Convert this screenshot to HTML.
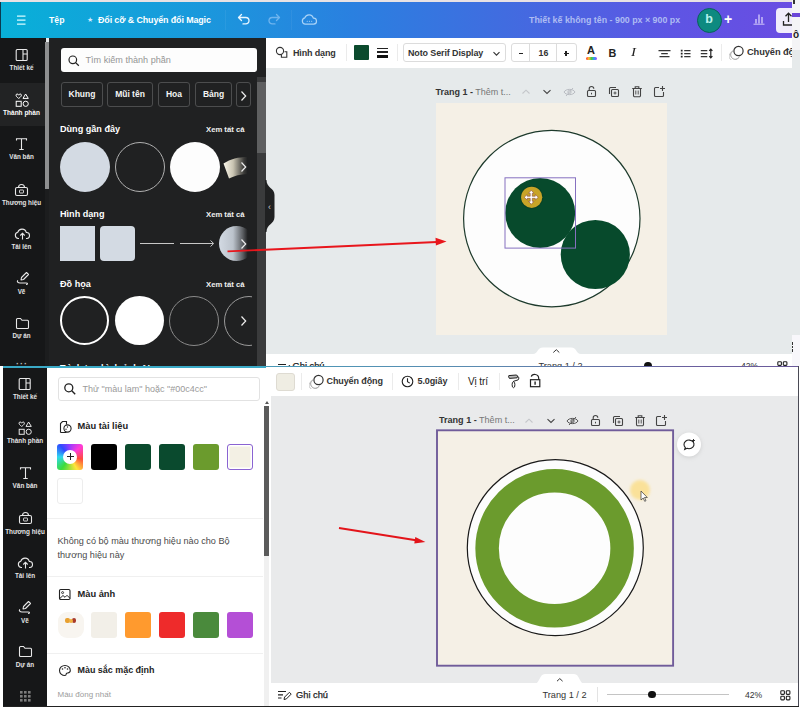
<!DOCTYPE html>
<html><head><meta charset="utf-8">
<style>
*{box-sizing:border-box;margin:0;padding:0}
html,body{width:800px;height:711px;overflow:hidden;background:#fff;font-family:"Liberation Sans","DejaVu Sans",sans-serif;}
.a{position:absolute}
.t{position:absolute;white-space:nowrap;line-height:1}
#top{position:absolute;left:0;top:0;width:800px;height:366px;overflow:hidden;background:#e6eaeb}
#bot{position:absolute;left:0;top:366px;width:800px;height:345px;overflow:hidden;background:#e9ebee}
.w{color:#fff}
.sbl{font-size:6.300px;color:#e4e4e4;font-weight:bold;text-align:center;width:43px;left:0}
.chip{top:82.300px;height:25px;border:1px solid #4c4d4e;border-radius:3px;color:#f4f4f4;font-size:8.500px;font-weight:bold;text-align:center;line-height:23px;white-space:nowrap}
.hd{font-size:9.100px;font-weight:bold;color:#fff}
.xm{font-size:7.700px;font-weight:bold;color:#f0f0f0}
.sbl2{font-size:6.400px;color:#e4e4e4;font-weight:bold;text-align:center;width:44px;left:3px}
.sw{width:26px;height:26px;border-radius:3px}
.ph{font-size:9.300px;font-weight:bold;color:#222;letter-spacing:0}
.tb{font-size:9px;font-weight:bold;color:#333;letter-spacing:-0.100px}
.sep{top:373px;width:1px;height:17px;background:#ebebeb}
</style></head><body>
<!-- ================= TOP SCREENSHOT ================= -->
<div id="top">
  <div class="a" style="left:0;top:0;width:800px;height:3px;background:#e8e2e4"></div>
  <div class="a" id="hdr" style="left:0;top:2px;width:800px;height:36px;background:linear-gradient(90deg,#08b0d8 0%,#1a98dc 25%,#2a80e0 44%,#426be0 64%,#5e55e4 84%,#6a4ce2 100%)"></div>
  <div class="a" style="left:0;top:2px;width:1px;height:36px;background:#0a3a50"></div>
  <!-- header content -->
  <svg class="a" style="left:16px;top:14px" width="11" height="12" viewBox="0 0 11 12"><path d="M1 2.2h8.5M1 6.2h8.5M1 10.2h8.5" stroke="#d8fbff" stroke-width="1.3" fill="none"/></svg>
  <div class="t w" style="left:49px;top:15.500px;font-size:8.700px;font-weight:bold">Tệp</div>
  <div class="t" style="left:87px;top:16px;font-size:7px;color:#cfe9ff">★</div>
  <div class="t w" style="left:98px;top:15.500px;font-size:8.900px;font-weight:bold;letter-spacing:-0.100px">Đổi cỡ &amp; Chuyển đổi Magic</div>
  <div class="a" style="left:225px;top:10px;width:1px;height:20px;background:rgba(255,255,255,.06)"></div>
  <svg class="a" style="left:237px;top:13px" width="15" height="13" viewBox="0 0 15 13"><path d="M4.5 1.5 1.5 4.5l3 3M1.8 4.5h7a3.2 3.2 0 0 1 0 6.4H6" stroke="#e9f6ff" stroke-width="1.3" fill="none" stroke-linecap="round" stroke-linejoin="round"/></svg>
  <svg class="a" style="left:266px;top:13px" width="15" height="13" viewBox="0 0 15 13"><path d="M10.5 1.5l3 3-3 3M13.2 4.5h-7a3.2 3.2 0 0 0 0 6.4H9" stroke="#6fb4ee" stroke-width="1.3" fill="none" stroke-linecap="round" stroke-linejoin="round"/></svg>
  <div class="a" style="left:291px;top:10px;width:1px;height:20px;background:rgba(255,255,255,.06)"></div>
  <svg class="a" style="left:301px;top:13px" width="17" height="13" viewBox="0 0 17 13"><path d="M4.3 11.2a3.2 3.2 0 0 1-.5-6.3 4.4 4.4 0 0 1 8.5.3 3 3 0 0 1 .4 6z" stroke="#a9d3f7" stroke-width="1.2" fill="none" stroke-linejoin="round"/><path d="M6.2 8.2h.1M8.4 8.2h.1M10.6 8.2h.1" stroke="#a9d3f7" stroke-width="1.1" stroke-linecap="round"/></svg>
  <div class="t" style="left:529px;top:15.5px;font-size:8.850px;font-weight:bold;color:#aebcf3;letter-spacing:0">Thiết kế không tên - 900 px × 900 px</div>
  <div class="a" style="left:696.500px;top:8px;width:25px;height:25px;border-radius:50%;background:#0d8a80;border:1.500px solid #0a5f5c"></div>
  <div class="t" style="left:705.300px;top:13px;font-size:12.500px;font-weight:bold;color:#b8f3ec">b</div>
  <div class="t w" style="left:724px;top:12px;font-size:14px;font-weight:bold">+</div>
  <svg class="a" style="left:752px;top:12px" width="14" height="14" viewBox="0 0 14 14"><path d="M4 11.5V7M7 11.5V2.5M10 11.5V5" stroke="#cfc6fa" stroke-width="1.4" fill="none"/><path d="M1.5 12.2h11" stroke="#cfc6fa" stroke-width="1"/></svg>
  <div class="a" style="left:776px;top:8px;width:24px;height:25px;border-radius:4px;background:#f0ecfb"></div>
  <svg class="a" style="left:782px;top:12px" width="12" height="15" viewBox="0 0 12 15"><path d="M6.5 10V1.5M3.5 4.2l3-3 3 3M1.5 9v4h10" stroke="#222" stroke-width="1.3" fill="none"/></svg>
  <div class="a" style="left:792px;top:0;width:8px;height:50px;background:#f4f4f6"></div>
  <div class="a" style="left:792px;top:13px;width:8px;height:4px;background:#6b46d8"></div>
  <div class="a" style="left:793px;top:0;width:2px;height:4px;background:#333"></div>
  <div class="t" style="left:793px;top:30px;font-size:10px;font-weight:bold;color:#222">ô</div>

  <!-- toolbar -->
  <div class="a" style="left:266px;top:38px;width:526px;height:29.500px;background:#fff"></div>
  <svg class="a" style="left:275px;top:46px" width="14" height="13" viewBox="0 0 14 13"><circle cx="5" cy="5" r="3.600" stroke="#333" stroke-width="1.100" fill="none"/><path d="M9.500 5.800h2.300v5.400H6.400V9" stroke="#333" stroke-width="1.100" fill="none"/></svg>
  <div class="t" style="left:293px;top:48.500px;font-size:9px;font-weight:bold;color:#333;letter-spacing:-0.150px">Hình dạng</div>
  <div class="a" style="left:346px;top:44px;width:1px;height:17px;background:#ebebeb"></div>
  <div class="a" style="left:353.500px;top:45px;width:15px;height:15px;background:#0b4a2d;border-radius:1px"></div>
  <div class="a" style="left:376.500px;top:48px;width:11px;height:1px;background:#222"></div>
  <div class="a" style="left:376.500px;top:51px;width:11px;height:2px;background:#222"></div>
  <div class="a" style="left:376.500px;top:54.500px;width:11px;height:3px;background:#111"></div>
  <div class="a" style="left:397px;top:44px;width:1px;height:17px;background:#ebebeb"></div>
  <div class="a" style="left:403px;top:43.300px;width:103px;height:19px;border:1px solid #dcdcdc;border-radius:3px"></div>
  <div class="t" style="left:408px;top:49px;font-size:8.950px;font-weight:bold;color:#333;letter-spacing:-0.100px">Noto Serif Display</div>
  <svg class="a" style="left:492px;top:51px" width="9" height="6" viewBox="0 0 9 6"><path d="M1.500 1.200l3 3 3-3" stroke="#333" stroke-width="1.100" fill="none"/></svg>
  <div class="a" style="left:511px;top:43.300px;width:66px;height:19px;border:1px solid #dcdcdc;border-radius:3px"></div>
  <div class="a" style="left:529px;top:44px;width:1px;height:18px;background:#dcdcdc"></div>
  <div class="a" style="left:556px;top:44px;width:1px;height:18px;background:#dcdcdc"></div>
  <div class="a" style="left:518.700px;top:52.500px;width:4.300px;height:1.400px;background:#222"></div>
  <div class="t" style="left:538.500px;top:48.500px;font-size:8.800px;font-weight:bold;color:#333">16</div>
  <div class="a" style="left:563.500px;top:52.500px;width:5px;height:1.400px;background:#222"></div>
  <div class="a" style="left:565.300px;top:50.700px;width:1.400px;height:5px;background:#222"></div>
  <div class="t" style="left:587px;top:45.300px;font-size:11px;font-weight:bold;color:#222">A</div>
  <div class="a" style="left:585.500px;top:56.500px;width:11.500px;height:3px;border-radius:1.500px;background:linear-gradient(90deg,#f33 0%,#fb3 25%,#4c4 50%,#39f 75%,#a4f 100%)"></div>
  <div class="t" style="left:608.500px;top:47.500px;font-size:10.800px;font-weight:bold;color:#222">B</div>
  <div class="t" style="left:630.500px;top:46.500px;font-size:11.500px;font-style:italic;color:#222;font-family:'Liberation Serif',serif;transform:scaleX(1.300);transform-origin:left">I</div>
  <svg class="a" style="left:657.500px;top:47px" width="13" height="11" viewBox="0 0 13 11"><path d="M.5 3.600h12M3.200 6.600h6.600M1.500 9.600h10" stroke="#333" stroke-width="1.100"/></svg>
  <svg class="a" style="left:679.500px;top:47px" width="12" height="11" viewBox="0 0 12 11"><path d="M4.200 3.600h6.300M4.200 6.600h6.300M4.200 9.600h6.300" stroke="#333" stroke-width="1.200"/><path d="M.8 3.600h1.800M.8 6.600h1.800M.8 9.600h1.800" stroke="#222" stroke-width="1.700"/></svg>
  <svg class="a" style="left:699.500px;top:46px" width="15" height="13" viewBox="0 0 15 13"><path d="M.8 4.600h6.500M.8 7.600h6.500M.8 10.600h6.500" stroke="#333" stroke-width="1.200"/><path d="M10.800 3.200v8.600M9.200 4.800l1.600-1.600 1.600 1.600M9.200 10.200l1.600 1.600 1.600-1.600" stroke="#222" stroke-width="1.200" fill="none"/></svg>
  <div class="a" style="left:721px;top:44px;width:1px;height:17px;background:#ebebeb"></div>
  <svg class="a" style="left:729px;top:45px" width="16" height="15" viewBox="0 0 16 15"><circle cx="9.500" cy="6" r="4.600" stroke="#333" stroke-width="1.200" fill="none"/><path d="M5.300 5.200a4.600 4.600 0 1 0 5.200 6.300" stroke="#888" stroke-width=".9" fill="none"/><path d="M3.300 7a4.400 4.400 0 1 0 5.200 6" stroke="#bbb" stroke-width=".8" fill="none"/></svg>
  <div class="t" style="left:747px;top:48px;font-size:9.300px;font-weight:bold;color:#333;letter-spacing:-0.100px;width:45px;overflow:hidden">Chuyển động</div>
  <!-- page header -->
  <div class="t" style="left:435.500px;top:87.500px;font-size:9px;color:#777"><b style="color:#333">Trang 1 -</b> Thêm t...</div>
  <svg class="a" style="left:521px;top:88px" width="10" height="8" viewBox="0 0 10 8"><path d="M1.500 5.500l3.500-3.300 3.500 3.300" stroke="#c4c6ca" stroke-width="1.100" fill="none"/></svg>
  <svg class="a" style="left:542px;top:88px" width="10" height="8" viewBox="0 0 10 8"><path d="M1.500 2.200l3.500 3.300 3.500-3.300" stroke="#444" stroke-width="1.100" fill="none"/></svg>
  <svg class="a" style="left:563px;top:87px" width="13" height="10" viewBox="0 0 13 10"><path d="M1 5c2-3.500 9-3.500 11 0-2 3.500-9 3.500-11 0z" stroke="#b9bcc2" stroke-width="1" fill="none"/><circle cx="6.500" cy="5" r="1.600" stroke="#b9bcc2" stroke-width="1" fill="none"/><path d="M3 9l7-8" stroke="#b9bcc2" stroke-width="1"/></svg>
  <svg class="a" style="left:586px;top:85px" width="11" height="13" viewBox="0 0 11 13"><rect x="1.500" y="5.500" width="8" height="6" rx="1" stroke="#444" stroke-width="1.100" fill="none"/><path d="M3.200 5.500V3.800a2.300 2.300 0 0 1 4.600 0" stroke="#444" stroke-width="1.100" fill="none"/><path d="M5.500 7.800v1.600" stroke="#444" stroke-width="1"/></svg>
  <svg class="a" style="left:608px;top:86px" width="12" height="12" viewBox="0 0 12 12"><rect x="3.500" y="3.500" width="7" height="7" rx="1" stroke="#444" stroke-width="1.100" fill="none"/><path d="M8 1.500H2.500a1 1 0 0 0-1 1V8" stroke="#444" stroke-width="1.100" fill="none"/><path d="M7 5.500v3M5.500 7h3" stroke="#444" stroke-width=".9"/></svg>
  <svg class="a" style="left:631px;top:85px" width="12" height="13" viewBox="0 0 12 13"><path d="M2.500 3.500h7v7a1.200 1.200 0 0 1-1.200 1.200H3.700a1.200 1.200 0 0 1-1.200-1.200zM1.200 3.500h9.600M4.200 3.200V1.800h3.600v1.400" stroke="#444" stroke-width="1.100" fill="none"/><path d="M4.800 5.500v4M7.200 5.500v4" stroke="#444" stroke-width=".9"/></svg>
  <svg class="a" style="left:653px;top:85px" width="13" height="13" viewBox="0 0 13 13"><path d="M6 2.500H2.500a1 1 0 0 0-1 1v7a1 1 0 0 0 1 1h7a1 1 0 0 0 1-1V7" stroke="#444" stroke-width="1.100" fill="none"/><path d="M9.500 1v5M7 3.500h5" stroke="#444" stroke-width="1.100"/></svg>
  <!-- page -->
  <div class="a" style="left:435.500px;top:102.500px;width:231px;height:232.500px;background:#f5f0e6"></div>
  <svg class="a" style="left:430px;top:95px" width="250" height="250" viewBox="430 95 250 250">
    <circle cx="551.800" cy="218.600" r="88.200" fill="#fdfdfd" stroke="#1d3a2c" stroke-width="1.200"/>
    <circle cx="540.200" cy="213" r="35" fill="#074a2c"/>
    <circle cx="595.300" cy="254.500" r="34.600" fill="#074a2c"/>
    <rect x="505" y="177.800" width="70.500" height="70.300" fill="none" stroke="#8670c0" stroke-width="1"/>
    <circle cx="531.700" cy="197.300" r="11.500" fill="#0b3a22" opacity=".5"/>
    <circle cx="531.700" cy="197.300" r="10.600" fill="#c8a428"/>
    <path transform="translate(531.700 197.300) scale(1.150) translate(-531.700 -197.300)" d="M525.200 197.300l2.600-2.400v1.500h2.600v-2.600h-1.500l2.400-2.600 2.400 2.600h-1.500v2.600h2.600v-1.500l2.600 2.400-2.600 2.400v-1.500h-2.600v2.600h1.500l-2.400 2.600-2.400-2.600h1.500v-2.600h-2.600v1.500z" fill="#fff" stroke="#8a4a3a" stroke-width=".5"/>
  </svg>
  <!-- bottom bar of top screenshot -->
  <div class="a" style="left:266px;top:353.500px;width:526px;height:13px;background:#fff"></div>
  <svg class="a" style="left:530px;top:344px" width="60" height="10" viewBox="530 344 60 10"><path d="M533 354c5 0 4-6.500 10-6.500h28c6 0 5 6.500 10 6.500z" fill="#fff"/><path d="M553.300 352.500l3 -2.800 3 2.800" stroke="#333" stroke-width="1" fill="none"/></svg>
  <div class="a" style="left:792px;top:334.500px;width:8px;height:32px;background:#f8f7fb"></div>
  <div class="a" style="left:792.200px;top:342px;width:1.300px;height:10px;background:repeating-linear-gradient(180deg,#333 0 2.800px,transparent 2.800px 3.600px)"></div>
  <svg class="a" style="left:277px;top:361.500px" width="15" height="12" viewBox="0 0 15 12"><path d="M1 2.500h8M1 5.800h5M1 9h3.500" stroke="#222" stroke-width="1.200"/><path d="M7 10.500l.6-2.400 4.800-4.800 1.800 1.800-4.800 4.800z" stroke="#222" stroke-width="1" fill="none" stroke-linejoin="round"/></svg>
  <div class="t" style="left:292.500px;top:362.300px;font-size:9.300px;color:#222;-webkit-text-stroke:.25px #222">Ghi chú</div>
  <div class="t" style="left:538.500px;top:362px;font-size:9.200px;color:#333">Trang 1 / 2</div>
  <div class="a" style="left:644.200px;top:362px;width:7.600px;height:7.600px;border-radius:50%;background:#111"></div>
  <div class="t" style="left:741px;top:362.300px;font-size:8.600px;color:#333">42%</div>
  <svg class="a" style="left:777px;top:361px" width="11" height="11" viewBox="0 0 11 11"><rect x=".8" y=".8" width="3.600" height="3.600" rx=".8" stroke="#222" stroke-width="1.100" fill="none"/><rect x="6.300" y=".8" width="3.600" height="3.600" rx=".8" stroke="#222" stroke-width="1.100" fill="none"/><rect x=".8" y="6.300" width="3.600" height="3.600" rx=".8" stroke="#222" stroke-width="1.100" fill="none"/><rect x="6.300" y="6.300" width="3.600" height="3.600" rx=".8" stroke="#222" stroke-width="1.100" fill="none"/></svg>
  <!-- sidebar -->
  <div class="a" style="left:0;top:38px;width:46px;height:328px;background:#161718"></div>
  <div class="a" style="left:0;top:83px;width:45px;height:43px;background:#222324"></div>
  <div class="a" style="left:45px;top:42px;width:4px;height:147px;background:#8e8f90"></div>
  <div class="a" style="left:45px;top:189px;width:4px;height:177px;background:#1c1d1e"></div>
  <!-- sidebar icons -->
  <svg class="a" style="left:15px;top:48px" width="14" height="14" viewBox="0 0 14 14"><rect x="1.2" y="1.5" width="11" height="11" rx="1" stroke="#e8e8e8" stroke-width="1.1" fill="none"/><path d="M8 1.5v11M8 6h4.2" stroke="#e8e8e8" stroke-width="1.1"/></svg>
  <div class="t sbl" style="top:64.500px">Thiết kế</div>
  <svg class="a" style="left:14.500px;top:93px" width="15" height="15" viewBox="0 0 15 15"><path d="M1 2.2c0-1.6 2.2-1.6 2.7 0 .5-1.6 2.7-1.6 2.7 0 0 1.500-2.700 3.200-2.700 3.200S1 3.700 1 2.200z" stroke="#fff" stroke-width="1" fill="none"/><path d="M10.600 1 13.300 5.400H8z" stroke="#fff" stroke-width="1" fill="none" stroke-linejoin="round"/><rect x="1.200" y="8.300" width="5" height="5" stroke="#fff" stroke-width="1" fill="none"/><circle cx="10.700" cy="10.800" r="2.600" stroke="#fff" stroke-width="1" fill="none"/></svg>
  <div class="t sbl" style="top:109.500px;color:#fff;font-size:6.500px">Thành phần</div>
  <svg class="a" style="left:14.800px;top:137.300px" width="13" height="14" viewBox="0 0 13 14"><path d="M1.500 3.500V1.800h10v1.700M6.500 1.800v10.700M4.300 12.500h4.400" stroke="#e8e8e8" stroke-width="1.1" fill="none"/></svg>
  <div class="t sbl" style="top:154px">Văn bản</div>
  <svg class="a" style="left:14.300px;top:182.500px" width="15" height="14" viewBox="0 0 15 14"><rect x="1.500" y="4.500" width="12" height="8" rx="1.500" stroke="#e8e8e8" stroke-width="1.100" fill="none"/><path d="M4.500 4.500c0-4 6-4 6 0" stroke="#e8e8e8" stroke-width="1.100" fill="none"/><rect x="5.500" y="7" width="4" height="3" rx=".5" stroke="#e8e8e8" stroke-width=".9" fill="none"/></svg>
  <div class="t sbl" style="top:199.500px">Thương hiệu</div>
  <svg class="a" style="left:13.500px;top:227px" width="17" height="14" viewBox="0 0 17 14"><path d="M5 11.500H4.300a3.200 3.200 0 0 1-.5-6.300 4.400 4.400 0 0 1 8.500.3 3 3 0 0 1 .4 6H12" stroke="#e8e8e8" stroke-width="1.100" fill="none"/><path d="M8.500 12.500v-6M6.300 8.500l2.200-2.200 2.200 2.200" stroke="#e8e8e8" stroke-width="1.100" fill="none"/></svg>
  <div class="t sbl" style="top:244.200px">Tải lên</div>
  <svg class="a" style="left:15.800px;top:271.300px" width="15" height="15" viewBox="0 0 15 15"><path d="M5.500 6.500l5-5 2 2-5 5-2.500.5z" stroke="#e8e8e8" stroke-width="1.100" fill="none" stroke-linejoin="round"/><path d="M2 9.500c-1.500 1 0 2.500 2 2.500h6c2 0 2 1.500 0 1.500" stroke="#e8e8e8" stroke-width="1.100" fill="none"/></svg>
  <div class="t sbl" style="top:289px">Vẽ</div>
  <svg class="a" style="left:14.500px;top:317px" width="15" height="13" viewBox="0 0 15 13"><path d="M1.500 2.500a1 1 0 0 1 1-1h3l1.500 1.800h5.500a1 1 0 0 1 1 1v6.200a1 1 0 0 1-1 1h-10a1 1 0 0 1-1-1z" stroke="#e8e8e8" stroke-width="1.100" fill="none"/></svg>
  <div class="t sbl" style="top:332.600px">Dự án</div>
  <div class="t" style="left:16px;top:359.500px;font-size:9px;color:#bbb;letter-spacing:1px;font-weight:bold">···</div>
  <!-- panel -->
  <div class="a" style="left:49px;top:38px;width:217px;height:328px;background:#202122"></div>
  <div class="a" style="left:257px;top:77px;width:9px;height:289px;background:#3a3b3c"></div>
  <div class="a" style="left:257px;top:82px;width:9px;height:71px;background:#5e5f60"></div>
  <div class="a" style="left:60.500px;top:48px;width:196px;height:24px;background:#fdfdfd;border-radius:3px"></div>
  <svg class="a" style="left:66.500px;top:53.500px" width="14" height="14" viewBox="0 0 14 14"><circle cx="5.800" cy="5.800" r="3.800" stroke="#222" stroke-width="1.200" fill="none"/><path d="M8.600 8.600l3.200 3.200" stroke="#222" stroke-width="1.300"/></svg>
  <div class="t" style="left:85.500px;top:56px;font-size:9.100px;color:#959595">Tìm kiếm thành phần</div>
  <!-- chips -->
  <div class="a chip" style="left:61px;width:42px">Khung</div>
  <div class="a chip" style="left:107px;width:46px">Mũi tên</div>
  <div class="a chip" style="left:158px;width:32px">Hoa</div>
  <div class="a chip" style="left:195px;width:37px">Bảng</div>
  <div class="a chip" style="left:236px;width:15px"></div><svg class="a" style="left:240px;top:90px" width="8" height="12" viewBox="0 0 8 12"><path d="M1.500 1.500l4.200 4.500-4.200 4.500" stroke="#eee" stroke-width="1.200" fill="none"/></svg>
  <!-- recently used -->
  <div class="t hd" style="left:60px;top:125px">Dùng gần đây</div>
  <div class="t xm" style="left:206px;top:126px">Xem tất cả</div>
  <div class="a" style="left:60px;top:141.500px;width:50px;height:50px;border-radius:50%;background:#d3dae3"></div>
  <div class="a" style="left:115px;top:141.500px;width:50px;height:50px;border-radius:50%;border:1px solid #b0b0b0"></div>
  <div class="a" style="left:170px;top:141.500px;width:50px;height:50px;border-radius:50%;background:#fdfdfd"></div>
  <svg class="a" style="left:220px;top:152px" width="30" height="30" viewBox="220 152 30 30"><defs><linearGradient id="cupg" x1="0" x2="1" y1="0" y2="0"><stop offset="0" stop-color="#fbf7ea"/><stop offset=".4" stop-color="#c9c4b2"/><stop offset=".85" stop-color="#3a3a38"/><stop offset="1" stop-color="#202122"/></linearGradient></defs><path d="M223.500 163.500c7-4.500 15-6.500 24-6.500v17c-7 .3-13 1.800-18.500 4.500z" fill="url(#cupg)"/></svg>
  <svg class="a" style="left:240px;top:161px" width="8" height="12" viewBox="0 0 8 12"><path d="M1.500 1.500l4.200 4.500-4.200 4.500" stroke="#eee" stroke-width="1.200" fill="none"/></svg>
  <!-- shapes -->
  <div class="t hd" style="left:60px;top:210px">Hình dạng</div>
  <div class="t xm" style="left:206px;top:211px">Xem tất cả</div>
  <div class="a" style="left:60px;top:226px;width:35px;height:35px;background:#d3dae3"></div>
  <div class="a" style="left:100px;top:226px;width:35px;height:35px;background:#d3dae3;border-radius:4px"></div>
  <div class="a" style="left:140px;top:243px;width:34px;height:1px;background:#c8c8c8"></div>
  <div class="a" style="left:180px;top:243px;width:33px;height:1px;background:#c8c8c8"></div>
  <svg class="a" style="left:208px;top:239px" width="8" height="9" viewBox="0 0 8 9"><path d="M2.500 1.500l3.200 3-3.200 3" stroke="#c8c8c8" stroke-width="1" fill="none"/></svg>
  <div class="a" style="left:219px;top:226px;width:29px;height:35px;overflow:hidden"><div class="a" style="left:0;top:0;width:35px;height:35px;border-radius:50%;background:linear-gradient(90deg,#d3dae3 0%,#bcc3cc 40%,#5b5e62 68%,#202122 82%)"></div></div>
  <svg class="a" style="left:240px;top:238px" width="8" height="12" viewBox="0 0 8 12"><path d="M1.500 1.500l4.200 4.500-4.200 4.500" stroke="#eee" stroke-width="1.200" fill="none"/></svg>
  <!-- graphics -->
  <div class="t hd" style="left:60px;top:279.500px">Đồ họa</div>
  <div class="t xm" style="left:206px;top:280.500px">Xem tất cả</div>
  <div class="a" style="left:60px;top:296px;width:49px;height:49px;border-radius:50%;border:2px solid #fff"></div>
  <div class="a" style="left:115px;top:296px;width:49px;height:49px;border-radius:50%;background:#fff"></div>
  <div class="a" style="left:169px;top:296px;width:50px;height:50px;border-radius:50%;border:1px solid #8a8a8a"></div>
  <div class="a" style="left:224px;top:296px;width:28px;height:50px;overflow:hidden"><div class="a" style="left:0;top:0;width:50px;height:50px;border-radius:50%;border:1px solid #9a9a9a"></div></div>
  <svg class="a" style="left:240px;top:315px" width="8" height="12" viewBox="0 0 8 12"><path d="M1.500 1.500l4.200 4.500-4.200 4.500" stroke="#eee" stroke-width="1.200" fill="none"/></svg>
  <div class="t hd" style="left:60px;top:364.200px">Trình tạo hình ảnh AI</div>
  <!-- collapse handle -->
  <svg class="a" style="left:265px;top:178px" width="12" height="58" viewBox="265 178 12 58"><path d="M265 180h1.500c0 8 8 8 8 15v22c0 7-8 7-8 15H265z" fill="#202122"/></svg>
  <div class="t" style="left:268px;top:202.500px;font-size:9px;color:#ccc">&#x2039;</div>
  <!-- red arrow -->
  <svg class="a" style="left:220px;top:230px" width="240" height="30" viewBox="220 230 240 30"><path d="M227.500 251.400L437 242" stroke="#e8161c" stroke-width="1.900" fill="none"/><path d="M446.500 241.400l-11-3.600.4 7.600z" fill="#e8161c"/></svg>
</div>
<!-- ================= BOTTOM SCREENSHOT ================= -->
<div id="bot"><div class="a" style="left:0;top:-366px;width:800px;height:711px">
  <div class="a" style="left:0;top:366px;width:800px;height:345px;background:#fff"></div>
  <!-- canvas bg -->
  <div class="a" style="left:271px;top:367px;width:527px;height:339px;background:#e9eaeb"></div>
  <!-- sidebar -->
  <div class="a" style="left:3px;top:367px;width:44px;height:339px;background:#161718"></div>
  <svg class="a" style="left:18px;top:377px" width="14" height="14" viewBox="0 0 14 14"><rect x="1.200" y="1.500" width="11" height="11" rx="1" stroke="#e8e8e8" stroke-width="1.100" fill="none"/><path d="M8 1.500v11M8 6h4.200" stroke="#e8e8e8" stroke-width="1.100"/></svg>
  <div class="t sbl2" style="top:393.500px">Thiết kế</div>
  <svg class="a" style="left:18px;top:421px" width="15" height="15" viewBox="0 0 15 15"><path d="M1 2.200c0-1.600 2.200-1.600 2.700 0 .5-1.600 2.700-1.600 2.700 0 0 1.500-2.700 3.200-2.700 3.200S1 3.700 1 2.200z" stroke="#e8e8e8" stroke-width="1" fill="none"/><path d="M10.600 1 13.300 5.400H8z" stroke="#e8e8e8" stroke-width="1" fill="none" stroke-linejoin="round"/><rect x="1.200" y="8.300" width="5" height="5" stroke="#e8e8e8" stroke-width="1" fill="none"/><circle cx="10.700" cy="10.800" r="2.600" stroke="#e8e8e8" stroke-width="1" fill="none"/></svg>
  <div class="t sbl2" style="top:437.500px">Thành phần</div>
  <svg class="a" style="left:19px;top:466px" width="13" height="14" viewBox="0 0 13 14"><path d="M1.500 3.500V1.800h10v1.700M6.500 1.800v10.700M4.300 12.500h4.400" stroke="#e8e8e8" stroke-width="1.100" fill="none"/></svg>
  <div class="t sbl2" style="top:483px">Văn bản</div>
  <svg class="a" style="left:18px;top:511px" width="15" height="14" viewBox="0 0 15 14"><rect x="1.500" y="4.500" width="12" height="8" rx="1.500" stroke="#e8e8e8" stroke-width="1.100" fill="none"/><path d="M4.500 4.500c0-4 6-4 6 0" stroke="#e8e8e8" stroke-width="1.100" fill="none"/><rect x="5.500" y="7" width="4" height="3" rx=".5" stroke="#e8e8e8" stroke-width=".9" fill="none"/></svg>
  <div class="t sbl2" style="top:528.500px">Thương hiệu</div>
  <svg class="a" style="left:17px;top:556px" width="17" height="14" viewBox="0 0 17 14"><path d="M5 11.500H4.300a3.200 3.200 0 0 1-.5-6.300 4.400 4.400 0 0 1 8.500.3 3 3 0 0 1 .4 6H12" stroke="#e8e8e8" stroke-width="1.100" fill="none"/><path d="M8.500 12.500v-6M6.300 8.500l2.200-2.200 2.200 2.200" stroke="#e8e8e8" stroke-width="1.100" fill="none"/></svg>
  <div class="t sbl2" style="top:572.500px">Tải lên</div>
  <svg class="a" style="left:18px;top:600px" width="15" height="15" viewBox="0 0 15 15"><path d="M5.500 6.500l5-5 2 2-5 5-2.500.5z" stroke="#e8e8e8" stroke-width="1.100" fill="none" stroke-linejoin="round"/><path d="M2 9.500c-1.500 1 0 2.500 2 2.500h6c2 0 2 1.500 0 1.500" stroke="#e8e8e8" stroke-width="1.100" fill="none"/></svg>
  <div class="t sbl2" style="top:618px">Vẽ</div>
  <svg class="a" style="left:18px;top:645px" width="15" height="13" viewBox="0 0 15 13"><path d="M1.500 2.500a1 1 0 0 1 1-1h3l1.500 1.800h5.500a1 1 0 0 1 1 1v6.200a1 1 0 0 1-1 1h-10a1 1 0 0 1-1-1z" stroke="#e8e8e8" stroke-width="1.100" fill="none"/></svg>
  <div class="t sbl2" style="top:661.800px">Dự án</div>
  <svg class="a" style="left:20px;top:691px" width="11" height="11" viewBox="0 0 11 11" fill="#7c7c7c"><rect x="0" y="0" width="2.600" height="2.600"/><rect x="4" y="0" width="2.600" height="2.600"/><rect x="8" y="0" width="2.600" height="2.600"/><rect x="0" y="4" width="2.600" height="2.600"/><rect x="4" y="4" width="2.600" height="2.600"/><rect x="8" y="4" width="2.600" height="2.600"/><rect x="0" y="8" width="2.600" height="2.600"/><rect x="4" y="8" width="2.600" height="2.600"/><rect x="8" y="8" width="2.600" height="2.600"/></svg>
  <!-- panel -->
  <div class="a" style="left:47px;top:367px;width:223px;height:339px;background:#fff"></div>
  <div class="a" style="left:57.500px;top:377px;width:202.500px;height:24px;border:1px solid #e2e2e2;border-radius:3px;background:#fff"></div>
  <svg class="a" style="left:63px;top:382px" width="14" height="14" viewBox="0 0 14 14"><circle cx="5.800" cy="5.800" r="4" stroke="#222" stroke-width="1.300" fill="none"/><path d="M8.800 8.800l3.400 3.400" stroke="#222" stroke-width="1.400"/></svg>
  <div class="t" style="left:82.500px;top:384.500px;font-size:9px;color:#9a9a9a">Thử "màu lam" hoặc "#00c4cc"</div>
  <div class="a" style="left:264px;top:405.500px;width:5px;height:150px;background:#5b5b5b"></div><div class="a" style="left:264.500px;top:400.500px;width:0;height:0;border-left:2px solid transparent;border-right:2px solid transparent;border-bottom:3px solid #555"></div>
  <div class="a" style="left:264px;top:556px;width:5px;height:150px;background:#f0f0f0"></div>
  <svg class="a" style="left:58px;top:420px" width="15" height="14" viewBox="0 0 15 14"><path d="M2.500 12.500h6M2.500 12.500V3.500l2-2h4v3" stroke="#222" stroke-width="1.100" fill="none"/><circle cx="9.500" cy="8.500" r="3.600" stroke="#222" stroke-width="1.100" fill="#fff"/><circle cx="9.500" cy="7" r=".7" fill="#222"/><circle cx="8" cy="9.300" r=".7" fill="#222"/></svg>
  <div class="t ph" style="left:77.500px;top:421.800px">Màu tài liệu</div>
  <div class="a sw" style="left:57px;top:443.500px;background:conic-gradient(from 0deg,#9a3bff 0deg,#ff3bd8 45deg,#ff4b3b 100deg,#ffe53b 150deg,#3bdc3b 215deg,#2fd8f0 270deg,#2f4bff 320deg,#9a3bff 360deg)"></div>
  <div class="a" style="left:63.200px;top:449.500px;width:14px;height:14px;border-radius:50%;background:#fff"></div>
  <div class="a" style="left:66.700px;top:455.900px;width:7px;height:1.200px;background:#222"></div>
  <div class="a" style="left:69.600px;top:453px;width:1.200px;height:7px;background:#222"></div>
  <div class="a sw" style="left:91px;top:443.500px;background:#000"></div>
  <div class="a sw" style="left:125px;top:443.500px;background:#0b4a2d"></div>
  <div class="a sw" style="left:159px;top:443.500px;background:#0a4a2e"></div>
  <div class="a sw" style="left:193px;top:443.500px;background:#6b9b2d"></div>
  <div class="a sw" style="left:227px;top:443.500px;background:#f3f0e4;border:1.500px solid #8a63d2;box-shadow:inset 0 0 0 1.500px #fff"></div>
  <div class="a sw" style="left:57px;top:478px;background:#fff;border:1px solid #ededed"></div>
  <div class="a" style="left:47px;top:518px;width:216px;height:1px;background:#f0f0f0"></div>
  <div class="t" style="left:57.500px;top:537px;font-size:9.120px;color:#4a4a4a;letter-spacing:0">Không có bộ màu thương hiệu nào cho Bộ</div>
  <div class="t" style="left:57.500px;top:551px;font-size:9.120px;color:#4a4a4a;letter-spacing:0">thương hiệu này</div>
  <div class="a" style="left:47px;top:575.500px;width:216px;height:1px;background:#f0f0f0"></div>
  <svg class="a" style="left:58px;top:588px" width="14" height="13" viewBox="0 0 14 13"><rect x="1.500" y="1.500" width="10.500" height="10" rx="1.200" stroke="#222" stroke-width="1.100" fill="none"/><circle cx="4.600" cy="4.600" r="1" stroke="#222" stroke-width=".9" fill="none"/><path d="M1.800 10.500l3.200-3 2 1.800 2-2 3 3" stroke="#222" stroke-width="1" fill="none"/></svg>
  <div class="t ph" style="left:77.500px;top:590.200px">Màu ảnh</div>
  <div class="a sw" style="left:57.500px;top:612px;background:#f8f5f0;border-radius:9px"></div>
  <div class="a" style="left:64.500px;top:617.500px;width:5px;height:5.500px;background:#e8a030;border-radius:2px"></div>
  <div class="a" style="left:71.500px;top:617.500px;width:4.500px;height:5.500px;background:#a83a2c;border-radius:2px"></div>
  <div class="a" style="left:68.500px;top:618.500px;width:4px;height:4.500px;background:#f0b040;border-radius:2px"></div>
  <div class="a sw" style="left:91px;top:612px;background:#f2efe8"></div>
  <div class="a sw" style="left:125px;top:612px;background:#ff9a2e"></div>
  <div class="a sw" style="left:159px;top:612px;background:#ee2b2b"></div>
  <div class="a sw" style="left:193px;top:612px;background:#4a8a3c"></div>
  <div class="a sw" style="left:227px;top:612px;background:#b44fd6"></div>
  <div class="a" style="left:47px;top:653px;width:216px;height:1px;background:#f0f0f0"></div>
  <svg class="a" style="left:58px;top:664px" width="14" height="13" viewBox="0 0 14 13"><path d="M7 1.500a5.500 5 0 1 0 0 10c1.500 0 1-1.500 1.500-2.200.6-.8 3.800.4 3.800-2.800 0-3-2.400-5-5.300-5z" stroke="#222" stroke-width="1.100" fill="none"/><circle cx="4.500" cy="5" r=".8" fill="#222"/><circle cx="7" cy="3.800" r=".8" fill="#222"/><circle cx="9.500" cy="5" r=".8" fill="#222"/></svg>
  <div class="t ph" style="left:77.500px;top:666.200px;font-size:8.950px">Màu sắc mặc định</div>
  <div class="t" style="left:57.500px;top:690.500px;font-size:8px;color:#9c9c9c">Màu đồng nhất</div>
  <!-- toolbar -->
  <div class="a" style="left:271px;top:367px;width:527px;height:29px;background:#fff"></div>
  <div class="a" style="left:275.500px;top:372.500px;width:19.500px;height:18.500px;background:#efede3;border:1px solid #dedbd2;border-radius:3px"></div>
  <div class="a sep" style="left:301px"></div>
  <svg class="a" style="left:309px;top:374px" width="16" height="15" viewBox="0 0 16 15"><circle cx="9.500" cy="6" r="4.600" stroke="#333" stroke-width="1.200" fill="none"/><path d="M5.300 5.200a4.600 4.600 0 1 0 5.200 6.300" stroke="#888" stroke-width=".9" fill="none"/><path d="M3.300 7a4.400 4.400 0 1 0 5.200 6" stroke="#bbb" stroke-width=".8" fill="none"/></svg>
  <div class="t tb" style="left:326.500px;top:377px">Chuyển động</div>
  <div class="a sep" style="left:392px"></div>
  <svg class="a" style="left:401px;top:375px" width="13" height="13" viewBox="0 0 13 13"><circle cx="6.500" cy="6.500" r="5.300" stroke="#222" stroke-width="1.100" fill="none"/><path d="M6.500 3.300v3.400l2.300 1.400" stroke="#222" stroke-width="1.100" fill="none"/></svg>
  <div class="t tb" style="left:417.500px;top:377px">5.0giây</div>
  <div class="a sep" style="left:457.500px"></div>
  <div class="t tb" style="left:468px;top:376.500px;font-weight:normal;color:#222;font-size:10px">Vị trí</div>
  <div class="a sep" style="left:498.500px"></div>
  <svg class="a" style="left:500px;top:368px" width="50" height="26" viewBox="500 368 50 26"><path d="M508.600 376.800l.2-1.200 7.800-.6.900 1.200-.3 1.600-7.800.6z" stroke="#222" stroke-width="1" fill="#bbb" stroke-linejoin="round"/><path d="M517.300 376.200c1.800.4 1.900 2.600.8 3.700l-4.600 1.400v.8" stroke="#222" stroke-width="1" fill="none"/><ellipse cx="513.500" cy="384.700" rx="1.400" ry="3" stroke="#222" stroke-width="1" fill="none"/><rect x="530.500" y="379.700" width="9.300" height="7" stroke="#222" stroke-width="1.200" fill="none"/><path d="M531.300 376.700c.8-3.200 7.200-3.200 7.400 1.500v1.500" stroke="#222" stroke-width="1.200" fill="none"/><path d="M535.100 381.500v3.200" stroke="#222" stroke-width="1.400"/></svg>
  <!-- page header -->
  <div class="t" style="left:439px;top:416.200px;font-size:9.050px;color:#777"><b style="color:#333">Trang 1 -</b> Thêm t...</div>
  <svg class="a" style="left:524px;top:416.7px" width="10" height="8" viewBox="0 0 10 8"><path d="M1.500 5.500l3.500-3.300 3.500 3.300" stroke="#c4c6ca" stroke-width="1.100" fill="none"/></svg>
  <svg class="a" style="left:546px;top:416.7px" width="10" height="8" viewBox="0 0 10 8"><path d="M1.500 2.200l3.500 3.300 3.500-3.300" stroke="#444" stroke-width="1.100" fill="none"/></svg>
  <svg class="a" style="left:566px;top:415.7px" width="13" height="10" viewBox="0 0 13 10"><path d="M1 5c2-3.500 9-3.500 11 0-2 3.500-9 3.500-11 0z" stroke="#555" stroke-width="1" fill="none"/><circle cx="6.500" cy="5" r="1.600" stroke="#555" stroke-width="1" fill="none"/><path d="M3 9l7-8" stroke="#555" stroke-width="1"/></svg>
  <svg class="a" style="left:589.500px;top:413.7px" width="11" height="13" viewBox="0 0 11 13"><rect x="1.500" y="5.500" width="8" height="6" rx="1" stroke="#444" stroke-width="1.100" fill="none"/><path d="M3.200 5.500V3.800a2.300 2.300 0 0 1 4.600 0" stroke="#444" stroke-width="1.100" fill="none"/><path d="M5.500 7.800v1.600" stroke="#444" stroke-width="1"/></svg>
  <svg class="a" style="left:611.500px;top:414.7px" width="12" height="12" viewBox="0 0 12 12"><rect x="3.500" y="3.500" width="7" height="7" rx="1" stroke="#444" stroke-width="1.100" fill="none"/><path d="M8 1.500H2.500a1 1 0 0 0-1 1V8" stroke="#444" stroke-width="1.100" fill="none"/><path d="M7 5.500v3M5.500 7h3" stroke="#444" stroke-width=".9"/></svg>
  <svg class="a" style="left:634px;top:413.7px" width="12" height="13" viewBox="0 0 12 13"><path d="M2.500 3.500h7v7a1.200 1.200 0 0 1-1.200 1.200H3.700a1.200 1.200 0 0 1-1.200-1.200zM1.200 3.500h9.600M4.200 3.200V1.800h3.600v1.400" stroke="#444" stroke-width="1.100" fill="none"/><path d="M4.800 5.500v4M7.200 5.500v4" stroke="#444" stroke-width=".9"/></svg>
  <svg class="a" style="left:655px;top:413.7px" width="13" height="13" viewBox="0 0 13 13"><path d="M6 2.500H2.500a1 1 0 0 0-1 1v7a1 1 0 0 0 1 1h7a1 1 0 0 0 1-1V7" stroke="#444" stroke-width="1.100" fill="none"/><path d="M9.500 1v5M7 3.500h5" stroke="#444" stroke-width="1.100"/></svg>
  <!-- page -->
  <svg class="a" style="left:430px;top:420px" width="290" height="260" viewBox="430 420 290 260">
    <rect x="437" y="430.300" width="236.100" height="235.400" fill="#f5f0e6" stroke="#705c9a" stroke-width="1.900"/>
    <circle cx="555.300" cy="547.700" r="88" fill="#fdfdfd" stroke="#1a1a1a" stroke-width="1.200"/>
    <circle cx="554.600" cy="548.300" r="67.500" fill="none" stroke="#6b9b2d" stroke-width="23.500"/>
    <circle cx="640" cy="490" r="10" fill="#fbdf8c" opacity=".85" filter="url(#bl)"/>
    <defs><filter id="bl" x="-50%" y="-50%" width="200%" height="200%"><feGaussianBlur stdDeviation="1.500"/></filter>
    <filter id="sh" x="-50%" y="-50%" width="200%" height="200%"><feGaussianBlur stdDeviation="2"/></filter></defs>
    <path transform="translate(1.500,2.500)" d="M639.500 488.500v9l2.200-2 1.500 3.300 1.300-.6-1.500-3.200h2.800z" fill="#fff" stroke="#333" stroke-width=".7"/>
    <circle cx="689" cy="445.500" r="12" fill="#999" opacity=".35" filter="url(#sh)"/>
    <circle cx="689" cy="444.500" r="12" fill="#fff"/>
    <path d="M684 444.500a5 4.300 0 1 1 3 3.800l-2.300 1.200.6-2a4 4 0 0 1-1.300-3z" stroke="#222" stroke-width="1.100" fill="none"/>
    <path d="M693.500 439v3M692 440.500h3" stroke="#222" stroke-width=".9"/>
  </svg>
  <!-- red arrow -->
  <svg class="a" style="left:330px;top:515px" width="110" height="40" viewBox="330 515 110 40"><path d="M339 528L416 540.300" stroke="#e3141a" stroke-width="1.900" fill="none"/><path d="M425.400 541.900L414.300 543.400 415.300 536.900z" fill="#e3141a"/></svg>
  <!-- bottom bar -->
  <div class="a" style="left:270px;top:683px;width:528px;height:23px;background:#fff"></div>
  <svg class="a" style="left:530px;top:670px" width="60" height="14" viewBox="530 670 60 14"><path d="M534 684c6 0 5-10 11-10h29c6 0 5 10 11 10z" fill="#fff"/><path d="M557 681.200l2.800-2.600 2.800 2.600" stroke="#333" stroke-width="1" fill="none"/></svg>
  <svg class="a" style="left:277px;top:689px" width="15" height="12" viewBox="0 0 15 12"><path d="M1 2.500h8M1 5.800h5M1 9h3.500" stroke="#222" stroke-width="1.200"/><path d="M7 10.500l.6-2.400 4.800-4.800 1.800 1.800-4.800 4.800z" stroke="#222" stroke-width="1" fill="none" stroke-linejoin="round"/></svg>
  <div class="t" style="left:296px;top:690.500px;font-size:9.300px;color:#222;-webkit-text-stroke:.25px #222">Ghi chú</div>
  <div class="t" style="left:542.500px;top:690.500px;font-size:9.200px;color:#333">Trang 1 / 2</div>
  <div class="a" style="left:596.500px;top:687px;width:1px;height:15px;background:#e3e3e3"></div>
  <div class="a" style="left:607px;top:694.200px;width:122px;height:1px;background:#c4c4c4"></div>
  <div class="a" style="left:648.400px;top:690.800px;width:7.600px;height:7.600px;border-radius:50%;background:#111"></div>
  <div class="t" style="left:745px;top:691px;font-size:8.600px;color:#333">42%</div>
  <svg class="a" style="left:780px;top:690px" width="11" height="11" viewBox="0 0 11 11"><rect x=".8" y=".8" width="3.600" height="3.600" rx=".8" stroke="#222" stroke-width="1.100" fill="none"/><rect x="6.300" y=".8" width="3.600" height="3.600" rx=".8" stroke="#222" stroke-width="1.100" fill="none"/><rect x=".8" y="6.300" width="3.600" height="3.600" rx=".8" stroke="#222" stroke-width="1.100" fill="none"/><rect x="6.300" y="6.300" width="3.600" height="3.600" rx=".8" stroke="#222" stroke-width="1.100" fill="none"/></svg>
  <!-- frame lines -->
  <div class="a" style="left:3px;top:366px;width:263px;height:1.500px;background:#3aa9c6"></div>
  <div class="a" style="left:266px;top:366px;width:533px;height:1.200px;background:linear-gradient(90deg,#4a9ab8 0%,#5a8ab0 40%,#6a5f9e 80%,#6a5a9a 100%)"></div>
  <div class="a" style="left:798px;top:366px;width:1.200px;height:340px;background:#4a4a55"></div><div class="a" style="left:799.200px;top:366px;width:1px;height:345px;background:#fff"></div>
  <div class="a" style="left:3px;top:705.500px;width:796px;height:1px;background:#222"></div>
</div></div>
</body></html>
